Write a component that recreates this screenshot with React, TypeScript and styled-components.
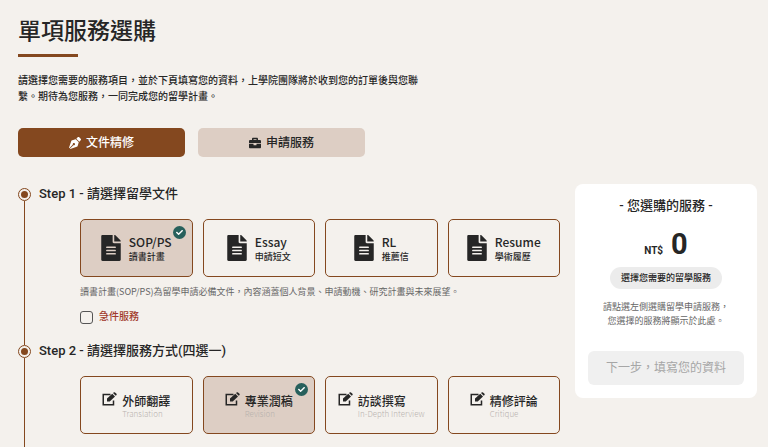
import React, { useState } from "react";
import styled, { createGlobalStyle, css } from "styled-components";
import { FaFileAlt, FaPenNib, FaBriefcase, FaCheck } from "react-icons/fa";

const colors = {
  page: "#f4f1ed",
  brown: "#84481f",
  beige: "#ddcec4",
  ink: "#262626",
  teal: "#27605c",
  red: "#a23b2c",
  grey: "#666666",
};

const GlobalStyle = createGlobalStyle`
  * { box-sizing: border-box; }
  body {
    margin: 0;
    background: ${colors.page};
    color: ${colors.ink};
    font-family: Roboto, "Noto Sans CJK TC", sans-serif;
  }
  h1, h2, p { margin: 0; }
  button { font-family: inherit; cursor: pointer; }
  html { scrollbar-width: none; }
`;

const Page = styled.div`
  padding: 15px 11px 0 18px;
`;

const Title = styled.h1`
  font-size: 23px;
  line-height: 34px;
  font-weight: 500;
`;

const TitleRule = styled.div`
  width: 60px;
  height: 3px;
  margin: 5px 0 16px;
  background: ${colors.brown};
`;

const Intro = styled.p`
  max-width: 418px;
  font-size: 10px;
  line-height: 16px;
  font-weight: 500;
`;

const Tabs = styled.div`
  display: grid;
  grid-template-columns: 1fr 1fr;
  gap: 13px;
  max-width: 347px;
  margin: 23px 0 27px;
`;

const Tab = styled.button<{ $active?: boolean }>`
  display: flex;
  align-items: center;
  justify-content: center;
  gap: 5px;
  padding: 6px 0 5px;
  border: 0;
  border-radius: 5px;
  background: ${(p) => (p.$active ? colors.brown : colors.beige)};
  color: ${(p) => (p.$active ? "#ffffff" : colors.ink)};
  font-size: 12px;
  line-height: 18px;
  font-weight: 500;
`;

const Columns = styled.div`
  display: grid;
  grid-template-columns: minmax(0, 1fr) 182px;
  gap: 15px;
  align-items: start;
`;

const Step = styled.section`
  display: grid;
  grid-template-columns: 13px minmax(0, 1fr);
  column-gap: 8px;
`;

const Rail = styled.div`
  display: flex;
  flex-direction: column;
  align-items: center;
  padding-top: 4px;
  margin-bottom: -4px;
`;

const Marker = styled.span`
  display: grid;
  place-items: center;
  width: 13px;
  height: 13px;
  border: 1px solid ${colors.brown};
  border-radius: 50%;

  &::after {
    content: "";
    width: 7px;
    height: 7px;
    border-radius: 50%;
    background: ${colors.brown};
  }
`;

const RailLine = styled.span`
  flex: 1;
  width: 1px;
  background: ${colors.brown};
`;

const StepTitle = styled.h2`
  font-size: 13px;
  line-height: 20px;
  font-weight: 500;
`;

const StepBody = styled.div`
  padding: 15px 0 16px 41px;
`;

const Options = styled.div`
  display: grid;
  grid-template-columns: repeat(4, minmax(0, 1fr));
  gap: 10px;
`;

const Option = styled.label<{ $selected: boolean }>`
  position: relative;
  display: flex;
  justify-content: center;
  align-items: center;
  height: 58px;
  border: 1px solid ${colors.brown};
  border-radius: 5px;
  cursor: pointer;
  ${(p) => p.$selected && css`background: ${colors.beige};`}
`;

const HiddenRadio = styled.input`
  position: absolute;
  opacity: 0;
  margin: 0;
`;

const Badge = styled.span`
  position: absolute;
  top: 6px;
  right: 6px;
  display: grid;
  place-items: center;
  width: 13px;
  height: 13px;
  border-radius: 50%;
  background: ${colors.teal};
  color: #ffffff;
`;

const DocIcon = styled(FaFileAlt)`
  width: 20px;
  height: 26px;
  flex: none;
`;

const DocText = styled.span`
  display: flex;
  flex-direction: column;
  margin-left: 8px;
  padding-top: 2px;
  font-family: "Noto Sans CJK TC", sans-serif;
  font-weight: 500;
`;

const DocName = styled.span`
  font-size: 12px;
  line-height: 16px;
`;

const DocCaption = styled.span`
  font-size: 9px;
  line-height: 14px;
`;

const ModeText = styled.span`
  display: flex;
  flex-direction: column;
  margin-left: 5px;
  padding-top: 2px;
  font-family: "Noto Sans CJK TC", sans-serif;
`;

const ModeName = styled.span`
  font-size: 12px;
  line-height: 16px;
  font-weight: 500;
`;

const ModeCaption = styled.span`
  color: #b8b2ad;
  font-size: 8px;
  line-height: 10px;
  font-weight: 300;
  white-space: nowrap;
`;

const ModeIcon = styled.svg`
  width: 15px;
  height: 14px;
  margin-bottom: 12px;
  flex: none;
`;

const Hint = styled.p`
  margin-top: 8px;
  color: ${colors.grey};
  font-family: "Noto Sans CJK TC", sans-serif;
  font-size: 9px;
  line-height: 14px;
`;

const Rush = styled.label`
  display: flex;
  align-items: center;
  gap: 6px;
  margin-top: 10px;
  color: ${colors.red};
  font-size: 10px;
  line-height: 16px;
  font-weight: 500;
`;

const RushBox = styled.input`
  appearance: none;
  width: 13px;
  height: 13px;
  margin: 0;
  border: 1px solid #555555;
  border-radius: 3px;

  &:checked {
    background: ${colors.brown};
  }
`;

const Summary = styled.aside`
  display: flex;
  flex-direction: column;
  align-items: center;
  padding: 12px 13px 13px;
  border-radius: 8px;
  background: #ffffff;
`;

const SummaryTitle = styled.h2`
  font-size: 13px;
  line-height: 20px;
  font-weight: 500;
`;

const Price = styled.p`
  display: flex;
  align-items: baseline;
  gap: 8px;
  margin-top: 13px;
  font-size: 29px;
  line-height: 30px;
  font-weight: 700;
`;

const Currency = styled.span`
  font-size: 10px;
`;

const Pill = styled.p`
  margin-top: 1px;
  padding: 4px 11px;
  border-radius: 11px;
  background: #ececec;
  font-size: 9px;
  line-height: 14px;
  font-weight: 500;
`;

const Note = styled.p`
  margin-top: 11px;
  color: ${colors.grey};
  font-size: 9px;
  line-height: 14px;
  text-align: center;
`;

const NextButton = styled.button`
  width: 100%;
  margin-top: 23px;
  padding: 8px 0;
  border: 0;
  border-radius: 6px;
  background: #f0f0f0;
  color: #a6a6a6;
  font-size: 12px;
  line-height: 18px;
`;

const documents = [
  { name: "SOP/PS", caption: "讀書計畫" },
  { name: "Essay", caption: "申請短文" },
  { name: "RL", caption: "推薦信" },
  { name: "Resume", caption: "學術履歷" },
];

const modes = [
  { name: "外師翻譯", caption: "Translation" },
  { name: "專業潤稿", caption: "Revision" },
  { name: "訪談撰寫", caption: "In-Depth Interview" },
  { name: "精修評論", caption: "Critique" },
];

function SelectedBadge() {
  return (
    <Badge>
      <FaCheck size={7} />
    </Badge>
  );
}

function PencilSquare() {
  return (
    <ModeIcon viewBox="0 0 30 28" aria-hidden="true">
      <path d="M17 5H2.500V25.500H23V17" fill="none" stroke="currentColor" strokeWidth="3" />
      <path d="M10 19V13L20.500 3.500L26 9L15.500 19Z" fill="currentColor" />
      <path d="M22 2.200L24 .7Q25 0 26 .8L29 3.700Q30 5 29 6L27.500 7.600Z" fill="currentColor" />
    </ModeIcon>
  );
}

export default function App() {
  const [tab, setTab] = useState(0);
  const [doc, setDoc] = useState(0);
  const [mode, setMode] = useState(1);

  return (
    <Page lang="zh-Hant">
      <GlobalStyle />
      <Title>單項服務選購</Title>
      <TitleRule />
      <Intro>
        請選擇您需要的服務項目，並於下頁填寫您的資料，上學院團隊將於收到您的訂單後與您聯
        <br />
        繫。期待為您服務，一同完成您的留學計畫。
      </Intro>
      <Tabs>
        <Tab type="button" $active={tab === 0} onClick={() => setTab(0)}>
          <FaPenNib size={12} />
          文件精修
        </Tab>
        <Tab type="button" $active={tab === 1} onClick={() => setTab(1)}>
          <FaBriefcase size={12} />
          申請服務
        </Tab>
      </Tabs>
      <Columns>
        <main>
          <Step>
            <Rail>
              <Marker />
              <RailLine />
            </Rail>
            <div>
              <StepTitle>Step 1 - 請選擇留學文件</StepTitle>
              <StepBody>
                <Options>
                  {documents.map((item, i) => (
                    <Option key={item.name} $selected={doc === i}>
                      <HiddenRadio type="radio" name="document" checked={doc === i} onChange={() => setDoc(i)} />
                      <DocIcon />
                      <DocText>
                        <DocName>{item.name}</DocName>
                        <DocCaption>{item.caption}</DocCaption>
                      </DocText>
                      {doc === i && <SelectedBadge />}
                    </Option>
                  ))}
                </Options>
                <Hint>
                  讀書計畫(SOP/PS)為留學申請必備文件，內容涵蓋個人背景、申請動機、研究計畫與未來展望。
                </Hint>
                <Rush>
                  <RushBox type="checkbox" />
                  急件服務
                </Rush>
              </StepBody>
            </div>
          </Step>
          <Step>
            <Rail>
              <Marker />
              <RailLine />
            </Rail>
            <div>
              <StepTitle>Step 2 - 請選擇服務方式(四選一)</StepTitle>
              <StepBody>
                <Options>
                  {modes.map((item, i) => (
                    <Option key={item.name} $selected={mode === i}>
                      <HiddenRadio type="radio" name="mode" checked={mode === i} onChange={() => setMode(i)} />
                      <PencilSquare />
                      <ModeText>
                        <ModeName>{item.name}</ModeName>
                        <ModeCaption>{item.caption}</ModeCaption>
                      </ModeText>
                      {mode === i && <SelectedBadge />}
                    </Option>
                  ))}
                </Options>
              </StepBody>
            </div>
          </Step>
        </main>
        <Summary>
          <SummaryTitle>- 您選購的服務 -</SummaryTitle>
          <Price>
            <Currency>NT$</Currency>0
          </Price>
          <Pill>選擇您需要的留學服務</Pill>
          <Note>
            請點選左側選購留學申請服務，
            <br />
            您選擇的服務將顯示於此處。
          </Note>
          <NextButton type="button" disabled>
            下一步，填寫您的資料
          </NextButton>
        </Summary>
      </Columns>
    </Page>
  );
}
